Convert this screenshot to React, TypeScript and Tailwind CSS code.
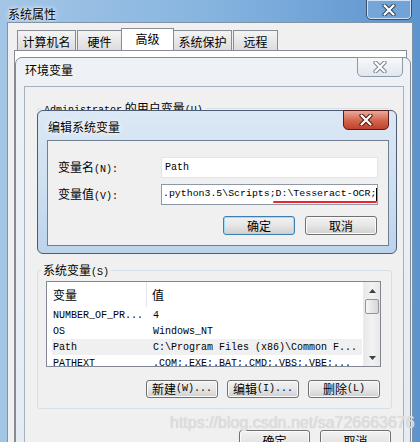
import type { ReactNode } from 'react';

const cjk = "font-['Noto_Sans_CJK_SC',sans-serif]";
const mono = "font-['Liberation_Mono','Noto_Sans_CJK_SC',monospace]";

function M({ children }: { children: ReactNode }) {
  return <span className={`${mono} text-[10px]`}>{children}</span>;
}

function CloseX({ fill, stroke }: { fill: string; stroke: string }) {
  return (
    <svg width="14" height="12" viewBox="0 0 14 12">
      <path d="M2.5 1.5 L11.5 10.5 M11.5 1.5 L2.5 10.5" stroke={stroke} strokeWidth="4.2" strokeLinecap="round" />
      <path d="M2.5 1.5 L11.5 10.5 M11.5 1.5 L2.5 10.5" stroke={fill} strokeWidth="2.2" strokeLinecap="round" />
    </svg>
  );
}

function Btn({ children, className = '', focused = false }: { children: ReactNode; className?: string; focused?: boolean }) {
  return (
    <div
      className={`${className} ${cjk} flex items-center justify-center rounded-[3px] border text-[12px] leading-none text-black bg-gradient-to-b from-[#f2f2f2] via-[#e6e6e6] to-[#d0d0d0] ${
        focused ? 'border-[#3c7fb1] shadow-[inset_0_0_0_1px_#9fdcf8]' : 'border-[#707070] shadow-[inset_0_0_0_1px_#fbfbfb]'
      }`}
    >
      {children}
    </div>
  );
}

function Tab({ label, className = '', active = false }: { label: string; className?: string; active?: boolean }) {
  return (
    <div
      className={`${className} ${cjk} flex items-start justify-center border border-b-0 border-[#898c95] text-[12px] leading-[14px] ${
        active ? 'relative z-10 h-[22px] bg-white pt-[3px]' : 'h-[20px] bg-gradient-to-b from-[#f4f4f4] to-[#dcdcdc] pt-[4px]'
      }`}
    >
      {label}
    </div>
  );
}

const rows = [
  { k: 'NUMBER_OF_PR...', v: '4', sel: false },
  { k: 'OS', v: 'Windows_NT', sel: false },
  { k: 'Path', v: 'C:\\Program Files (x86)\\Common F...', sel: true },
  { k: 'PATHEXT', v: '.COM;.EXE;.BAT;.CMD;.VBS;.VBE;...', sel: false },
];

export default function App() {
  return (
    <div className="relative flex h-[442px] w-[420px] flex-col overflow-hidden bg-gradient-to-r from-[#a4c6e6] via-[#86b4df] to-[#5c94cf]">
      {/* 系统属性 window */}
      <div className={`${cjk} h-[29px] pl-[8px] pt-[6px] text-[12px] leading-[16px] text-black [text-shadow:0_0_6px_#fff,0_0_3px_#fff]`}>
        系统属性
      </div>
      <div className="absolute right-[8px] top-[-1px] flex h-[21px] w-[46px] items-center justify-center rounded-b-[5px] border border-[#3b4f69] bg-[#8db6e0]/40 shadow-[inset_0_0_0_1px_#cfe2f5]">
        <CloseX fill="#ffffff" stroke="#36465a" />
      </div>
      <div className="mx-[7px] flex-1 border border-[#8393a6] bg-[#f0f0f0]">
        <div className="flex items-end pl-[9px] pt-[5px]">
          <Tab label="计算机名" className="w-[59px]" />
          <Tab label="硬件" className="ml-[1px] w-[45px]" />
          <Tab label="高级" className="-ml-[1px] w-[53px]" active />
          <Tab label="系统保护" className="-ml-[1px] w-[59px]" />
          <Tab label="远程" className="ml-[1px] w-[45px]" />
        </div>
        <div className="ml-[6px] mr-[5px] h-[400px] border border-[#898c95] bg-white" />
      </div>

      {/* 环境变量 window */}
      <div className="absolute left-[15px] top-[57px] h-[400px] w-[396px] rounded-t-[7px] border border-[#7f8c9c] bg-gradient-to-b from-[#eef2f6] to-[#e4ebf3]">
        <div className={`${cjk} h-[28px] pl-[9px] pt-[5px] text-[12px] leading-[14px] [text-shadow:0_0_6px_#fff]`}>环境变量</div>
        <div className="absolute right-[7px] top-[-1px] flex h-[20px] w-[46px] items-center justify-center rounded-b-[5px] border border-[#8c99a8] bg-gradient-to-b from-[#f7f8fa] to-[#e2e7ed]">
          <CloseX fill="#ffffff" stroke="#7a8695" />
        </div>
        <div className="ml-[8px] h-[380px] w-[380px] border border-[#a5b1bf] bg-[#f0f0f0] pl-[12px] pt-[21px]">
          <div className="relative h-[140px] w-[355px] rounded-[3px] border border-[#d5dfe5]">
            <div className={`${cjk} absolute -top-[8px] left-[3px] bg-[#f0f0f0] px-[3px] text-[12px] leading-[14px]`}>
              <M>Administrator</M> 的用户变量<M>(U)</M>
            </div>
          </div>

          <div className="relative mt-[22px] h-[139px] w-[355px] rounded-[3px] border border-[#d5dfe5] pl-[8px] pr-[11px] pt-[10px]">
            <div className={`${cjk} absolute -top-[8px] left-[3px] bg-[#f0f0f0] px-[2px] text-[12px] leading-[14px]`}>
              系统变量<M>(S)</M>
            </div>
            <div className="flex h-[86px] w-[335px] border border-[#828790] bg-white">
              <div className="flex-1 overflow-hidden">
                <div className={`${cjk} flex h-[25px] items-center text-[12px]`}>
                  <div className="flex h-full w-[100px] items-center border-r border-[#e5e5e5] pl-[6px]">变量</div>
                  <div className="pl-[5px]">值</div>
                </div>
                {rows.map((r) => (
                  <div
                    key={r.k}
                    className={`${mono} ml-[5px] mr-[1px] flex h-[16px] items-center whitespace-nowrap text-[10px] ${r.sel ? 'bg-[#f0f0f0]' : ''}`}
                  >
                    <div className="w-[95px] pl-[1px]">{r.k}</div>
                    <div className="pl-[6px]">{r.v}</div>
                  </div>
                ))}
              </div>
              <div className="flex w-[17px] flex-col border-l border-[#ececec] bg-gradient-to-r from-[#e8e8e8] via-[#f2f2f2] to-[#e8e8e8]">
                <div className="flex h-[17px] items-center justify-center">
                  <svg width="7" height="4" viewBox="0 0 7 4"><path d="M0 4 L3.5 0 L7 4 Z" fill="#404040" /></svg>
                </div>
                <div className="mx-[1px] h-[15px] rounded-[2px] border border-[#959595] bg-gradient-to-r from-[#f6f6f6] to-[#d6d6d6]" />
                <div className="flex-1" />
                <div className="flex h-[17px] items-center justify-center">
                  <svg width="7" height="4" viewBox="0 0 7 4"><path d="M0 0 L3.5 4 L7 0 Z" fill="#404040" /></svg>
                </div>
              </div>
            </div>
            <div className="mt-[13px] flex justify-end gap-[9px]">
              <Btn className="h-[18px] w-[72px]">新建<M>(W)...</M></Btn>
              <Btn className="h-[18px] w-[72px]">编辑<M>(I)...</M></Btn>
              <Btn className="h-[18px] w-[72px]">删除<M>(L)</M></Btn>
            </div>
          </div>

          <div className="mt-[21px] flex justify-end gap-[10px] pr-[12px]">
            <Btn className="h-[22px] w-[71px]">确定</Btn>
            <Btn className="h-[22px] w-[71px]">取消</Btn>
          </div>
        </div>
      </div>

      {/* 编辑系统变量 dialog */}
      <div className="absolute left-[37px] top-[110px] h-[144px] w-[360px] rounded-[6px] border border-[#4b5d72] bg-gradient-to-b from-[#dbe8f5] via-[#cfe0f1] to-[#bcd3ec]">
        <div className={`${cjk} h-[29px] pl-[10px] pt-[8px] text-[12px] leading-[16px] [text-shadow:0_0_6px_#fff,0_0_3px_#fff]`}>编辑系统变量</div>
        <div className="absolute right-[7px] top-[-1px] flex h-[20px] w-[46px] items-center justify-center rounded-b-[5px] border border-[#5a1e14] bg-gradient-to-b from-[#e9a99b] via-[#d4684f] to-[#c0402a]">
          <CloseX fill="#ffffff" stroke="#4a1a12" />
        </div>
        <div className={`${cjk} ml-[9px] h-[106px] w-[342px] border border-[#6e7f92] bg-[#f0f0f0] pl-[10px] pt-[16px] text-[12px]`}>
          <div className="flex h-[21px] items-center">
            <div className="w-[103px]">变量名<M>(N):</M></div>
            <div className={`${mono} flex h-[21px] w-[217px] items-center border border-[#dfe5ec] bg-white pl-[3px] text-[10px]`}>Path</div>
          </div>
          <div className="mt-[6px] flex h-[21px] items-center">
            <div className="w-[103px]">变量值<M>(V):</M></div>
            <div className={`${mono} relative flex h-[21px] w-[217px] items-center overflow-hidden whitespace-nowrap border border-[#8e99a5] bg-white pl-[1px] text-[9.9px]`}>
              {'.python3.5\\Scripts;D:\\Tesseract-OCR;'}
              <span className="ml-[0px] h-[13px] w-[1px] bg-black" />
              <div className="absolute bottom-[1px] left-[111px] h-[2px] w-[104px] rounded-full bg-[#e8262b]" />
            </div>
          </div>
          <div className="mt-[11px] flex justify-end gap-[10px] pr-[11px]">
            <Btn className="h-[19px] w-[72px]" focused>确定</Btn>
            <Btn className="h-[19px] w-[72px]">取消</Btn>
          </div>
        </div>
      </div>

      {/* watermark */}
      <div className="pointer-events-none absolute left-[170px] top-[414px] font-['Liberation_Sans',sans-serif] text-[16px] leading-[18px] text-[#dedede] [text-shadow:0_0_1px_#c8c8c8]">
        https://blog.csdn.net/sa726663676
      </div>
    </div>
  );
}
